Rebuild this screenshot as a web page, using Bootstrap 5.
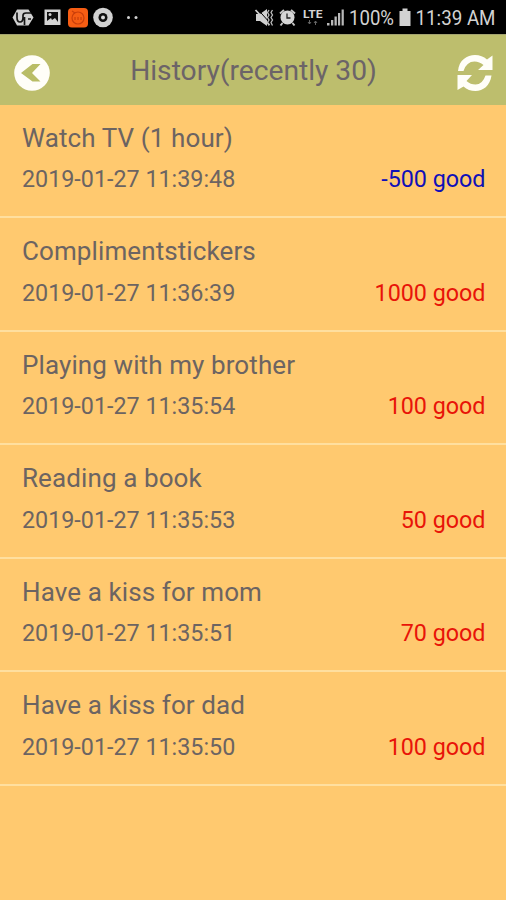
<!DOCTYPE html>
<html lang="en">
<head>
<meta charset="utf-8">
<meta name="viewport" content="width=device-width, initial-scale=1">
<title>History</title>
<link rel="stylesheet" href="https://cdn.jsdelivr.net/npm/bootstrap@5.3.0/dist/css/bootstrap.min.css">
<style>
body{background:#ffc96f;font-family:Roboto,sans-serif;color:#6c6462;min-height:900px;overflow:hidden}
svg{display:block;flex:none}
.statusbar{height:34px;background:#000;padding:0 8px 0 12px}
.titlebar{height:70.5px;background:#bdbe6d;padding:7px 12px 0 14px;border-top:1px solid #a3a370}
.titlebar h1{font-size:28.2px;line-height:32px;font-weight:400;color:#6c6468;padding-bottom:4px}
.entry{height:113.5px;padding:16.400px 20.500px 0 22px;border-bottom:2px solid #ffdf9f}
.entry-title{font-size:26px;line-height:34px;letter-spacing:.1px}
.entry-meta{font-size:23.3px;line-height:32px;margin-top:8.300px}
.spent{color:#1010b8}
.earned{color:#e81408}
</style>
</head>
<body>
<header>
  <div class="statusbar d-flex align-items-center justify-content-between">
    <svg width="134" height="34" viewBox="12 0 134 34">
      <path d="M17 9.500h11.500l5 8-5 8H17l-4.500-8z" fill="#d0d0d0"/>
      <path d="M17 12.500v5q0 4.500 3 4.500t3-4.500v-2q0-2.500 3-2.500h5M24.500 25v-8M28 19h3" fill="none" stroke="#161616" stroke-width="1.700"/>
      <path d="M44.500 9.500h16v15.500h-16z" fill="#d4d4d4"/><path d="M47 12h11v10l-3-4-3 2-1-2-4 3z" fill="#111"/><circle cx="50" cy="14.500" r="1.500" fill="#d4d4d4"/>
      <rect x="68" y="8" width="20" height="19.500" rx="4" fill="#f65d13"/>
      <g fill="none" stroke="#c93f0b" stroke-width="1.200"><circle cx="78" cy="18" r="6"/><path d="M75 20v-3m3 3v-3m3 3v-3M72 11l3 2"/></g>
      <circle cx="103" cy="17.500" r="9.800" fill="#d2d2d2"/><circle cx="103" cy="17.500" r="4.500" fill="#111"/><circle cx="103" cy="17.500" r="2" fill="#ddd"/>
      <circle cx="128.500" cy="17.500" r="1.500" fill="#d0d0d0"/><circle cx="136" cy="17.500" r="1.500" fill="#d0d0d0"/>
    </svg>
    <svg width="244" height="34" viewBox="254 0 244 34" font-family="Roboto,sans-serif">
      <path d="M256 14h4l7-5v17l-7-5h-4z" fill="#cfcfcf"/><path d="M257.500 9l13 14.500" stroke="#000" stroke-width="1"/><path d="M255.500 10l14 15" stroke="#cfcfcf" stroke-width="1.800"/>
      <path d="M269 10l-1.500 2.500 1.500 2.500-1.500 2.500 1.500 2.500-1.500 2.500 1.500 3M272.500 10l-1.500 2.500 1.500 2.500-1.500 2.500 1.500 2.500-1.500 2.500 1.500 3" fill="none" stroke="#bdbdbd" stroke-width="1.300"/>
      <circle cx="287.500" cy="17.500" r="7" fill="#d6d6d6"/><path d="M287 13.500v4.500h3.500" fill="none" stroke="#222" stroke-width="1.300"/>
      <path d="M280 13.500l4-3.500m7 0l4 3.500M282.500 23l-2 2.500m12-2.500l2 2.500" stroke="#c6c6c6" stroke-width="2"/>
      <text x="303" y="17.500" fill="#d4d4d4" font-size="11.500" font-weight="700" textLength="19.500" lengthAdjust="spacingAndGlyphs">LTE</text>
      <path d="M309.500 20v4m-1.500-2l1.500 2 1.500-2M315.500 25v-4m-1.500 2l1.500-2 1.500 2" stroke="#666" fill="none"/>
      <path d="M327 23h2.500v2.500h-2.500zM331 20h2.300v5.500H331zM334.500 16.500h2.300v9h-2.300zM338 13h2.200v12.500H338zM341.600 9.500h2.200v16h-2.200z" fill="#b9b9b9"/>
      <text x="349" y="25.300" fill="#d2d2d2" font-size="20.500" textLength="45" lengthAdjust="spacingAndGlyphs">100%</text>
      <path d="M402.500 8.500h5V11h3v15h-11V11h3z" fill="#d2d2d2"/>
      <text x="415.500" y="25.300" fill="#d2d2d2" font-size="20.500" textLength="80" lengthAdjust="spacingAndGlyphs">11:39 AM</text>
    </svg>
  </div>
  <nav class="titlebar d-flex align-items-center justify-content-between">
    <svg width="36" height="36" viewBox="0 0 36 36" role="img" aria-label="Back"><circle cx="18" cy="18" r="17.800" fill="#fffef8"/><path d="M7 18L18.500 9H26.500L18 18l8.500 8.500H18.500z" fill="#b9bd66"/></svg>
    <h1 class="mb-0">History(recently 30)</h1>
    <svg width="37" height="38" viewBox="457 54 37 38" role="img" aria-label="Refresh" fill="#fffef8"><path d="M458 71C459 60 467 55 475 55q7 0 12 4.500l5.500-4V70H478l5.500-5q-4-3.500-9-3.500-8 0-11 9.500z"/><path d="M491.500 75.500C490 86 483 91 475.500 91q-7 0-12-4.500l-6 3.500V75H472l-5.500 6q4 3.500 9 3.500 7 0 10-9z"/></svg>
  </nav>
</header>
<main>
  <section class="entry"><div class="entry-title">Watch TV (1 hour)</div><div class="entry-meta d-flex justify-content-between"><span>2019-01-27 11:39:48</span><span class="spent">-500 good</span></div></section>
  <section class="entry"><div class="entry-title">Complimentstickers</div><div class="entry-meta d-flex justify-content-between"><span>2019-01-27 11:36:39</span><span class="earned">1000 good</span></div></section>
  <section class="entry"><div class="entry-title">Playing with my brother</div><div class="entry-meta d-flex justify-content-between"><span>2019-01-27 11:35:54</span><span class="earned">100 good</span></div></section>
  <section class="entry"><div class="entry-title">Reading a book</div><div class="entry-meta d-flex justify-content-between"><span>2019-01-27 11:35:53</span><span class="earned">50 good</span></div></section>
  <section class="entry"><div class="entry-title">Have a kiss for mom</div><div class="entry-meta d-flex justify-content-between"><span>2019-01-27 11:35:51</span><span class="earned">70 good</span></div></section>
  <section class="entry"><div class="entry-title">Have a kiss for dad</div><div class="entry-meta d-flex justify-content-between"><span>2019-01-27 11:35:50</span><span class="earned">100 good</span></div></section>
</main>
<script src="https://cdn.jsdelivr.net/npm/bootstrap@5.3.0/dist/js/bootstrap.bundle.min.js"></script>
</body>
</html>
